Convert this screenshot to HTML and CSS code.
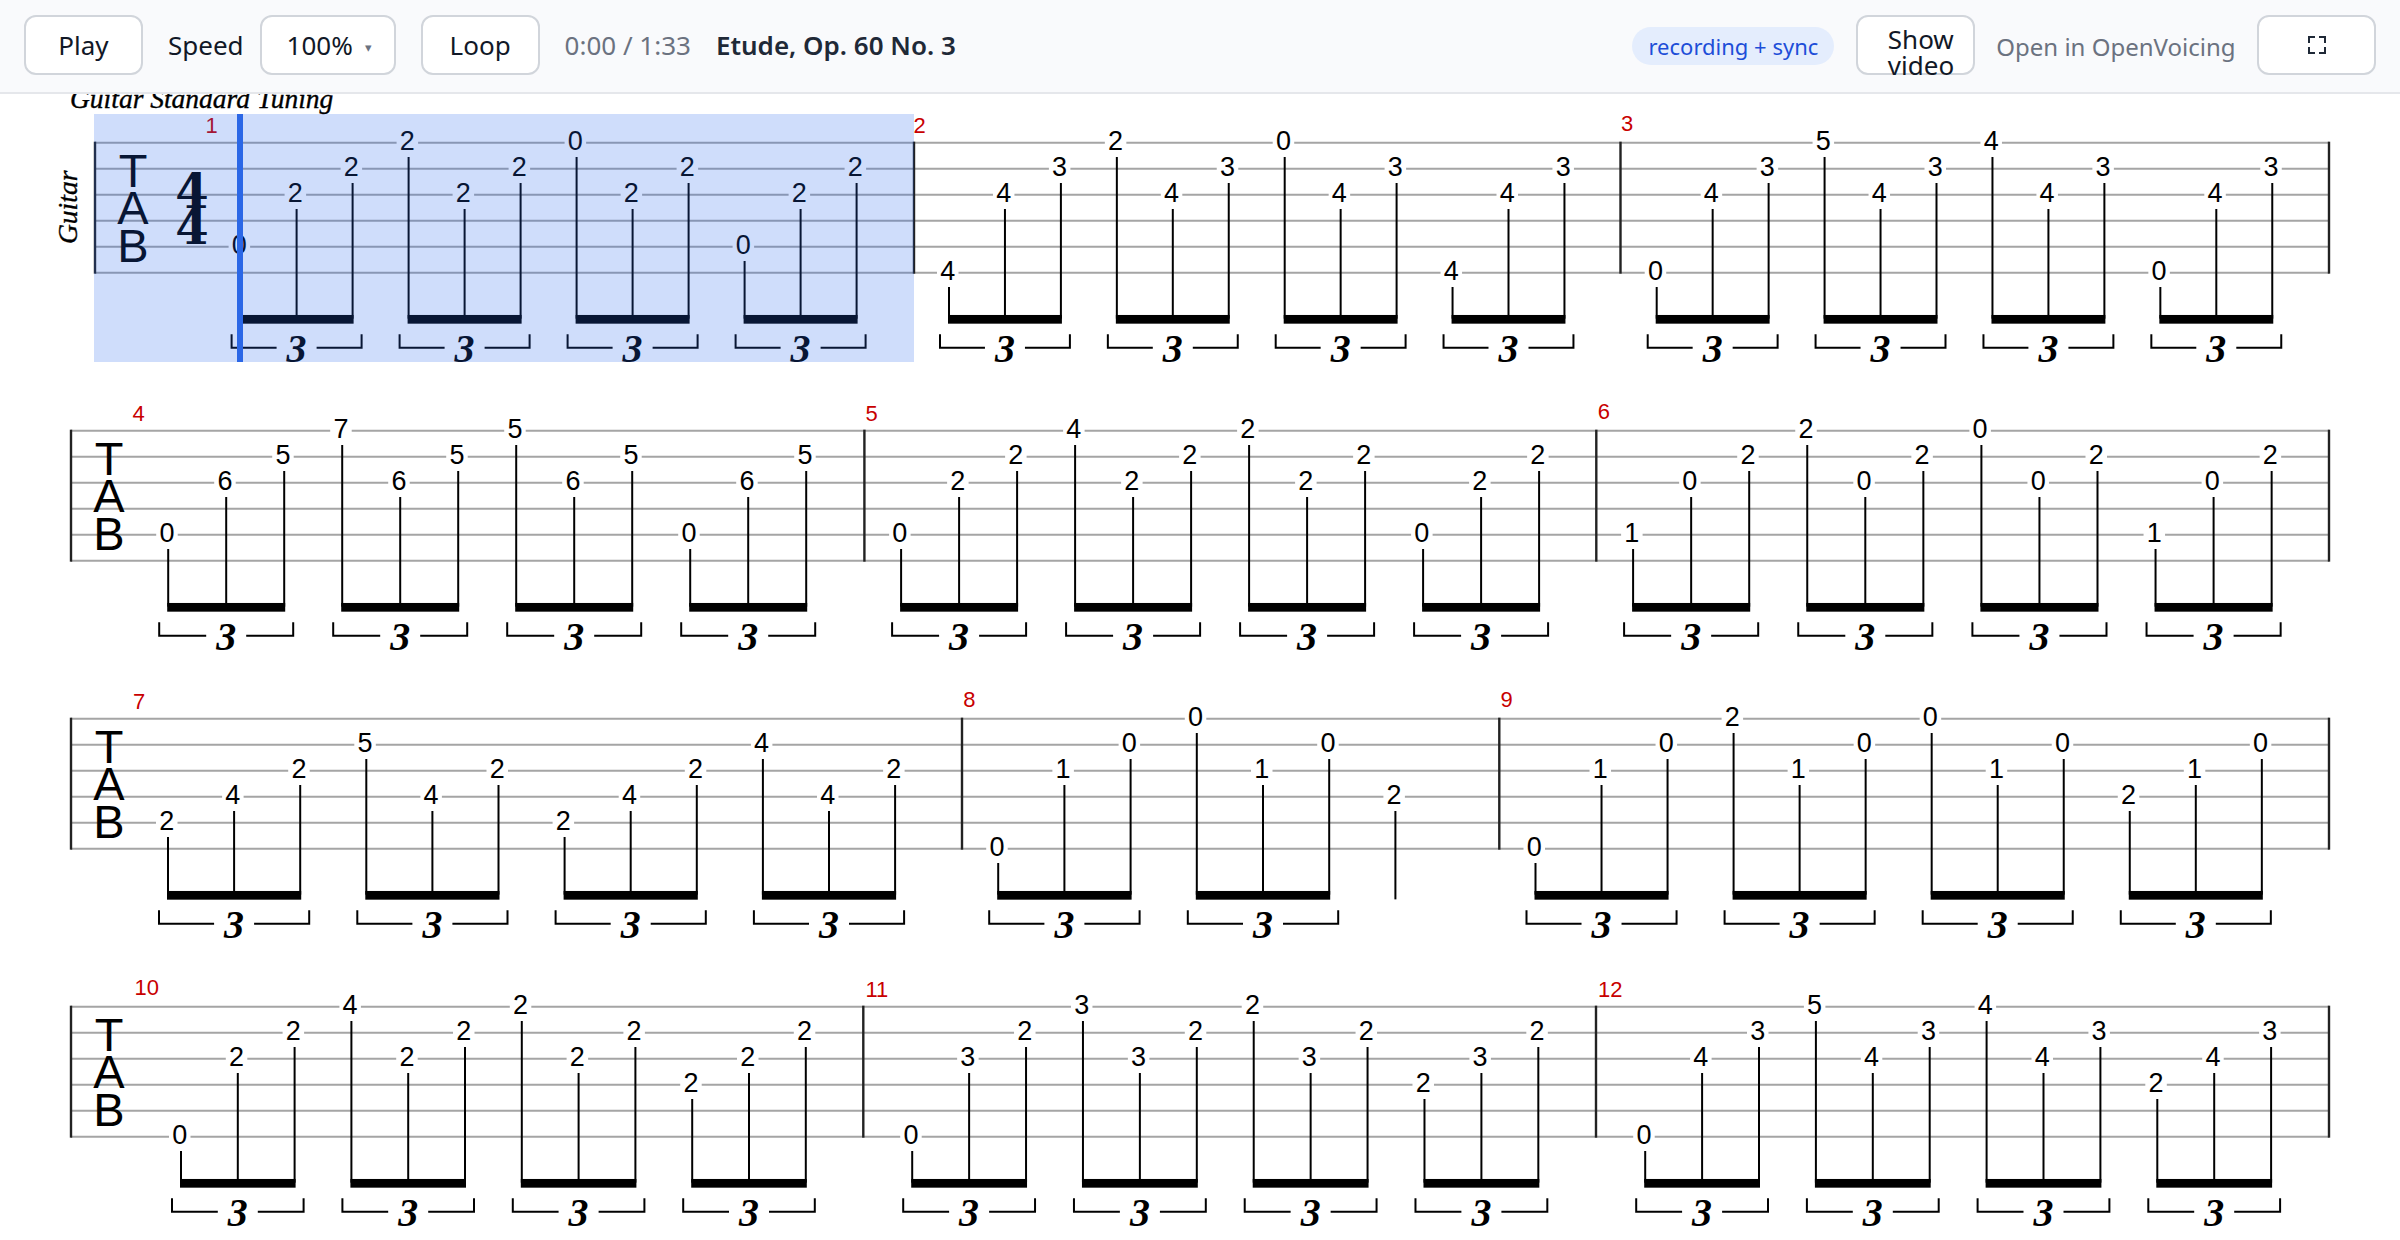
FILE: index.html
```html
<!DOCTYPE html>
<html lang="en">
<head>
<meta charset="utf-8">
<title>Etude, Op. 60 No. 3</title>
<link rel="stylesheet" href="styles.css">
</head>
<body>
<header class="toolbar">
  <button class="btn">Play</button>
  <div class="speed">
    <span class="speed-label">Speed</span>
    <div class="select"><span>100%</span><span class="caret">▾</span></div>
  </div>
  <button class="btn">Loop</button>
  <span class="time">0:00 / 1:33</span>
  <strong class="title">Etude, Op. 60 No. 3</strong>
  <div class="right">
    <span class="pill">recording + sync</span>
    <button class="btn btn-wrap">Show video</button>
    <a class="open-link">Open in OpenVoicing</a>
    <button class="btn" aria-label="Fullscreen">
      <svg class="fs-icon" viewBox="0 0 18 18"><path d="M1 7V1H7M11 1H17V7M17 11V17H11M7 17H1V11"/></svg>
    </button>
  </div>
</header>
<main class="score">
  <svg id="tab" class="tab" viewBox="0 94 2400 1146"></svg>
  <div class="highlight"></div>
  <div class="cursor"></div>
</main>
<script src="score.js"></script>
</body>
</html>
```

FILE: styles.css
```css
* { box-sizing: border-box; }
html, body { margin: 0; height: 100%; background: #fff; overflow: hidden; }
body { font-family: "Noto Sans", sans-serif; color: #111827; }

.toolbar {
  display: flex;
  align-items: center;
  gap: 25px;
  height: 94px;
  padding: 0 24px 2px;
  background: #f9fafc;
  border-bottom: 2px solid #e5e7eb;
  font-size: 26px;
  position: relative;
  z-index: 2;
}
.btn {
  width: 119px;
  height: 60px;
  padding: 0;
  background: #fff;
  border: 2px solid #d1d5db;
  border-radius: 12px;
  font: inherit;
  line-height: 26px;
  color: #111827;
  display: flex;
  align-items: center;
  justify-content: center;
}
.btn-wrap { display: block; padding: 9px 30px 0; }
.speed { display: flex; align-items: center; gap: 16px; }
.select {
  width: 136px;
  height: 60px;
  background: #fff;
  border: 2px solid #d1d5db;
  border-radius: 12px;
  display: flex;
  align-items: center;
  padding-left: 25px;
  gap: 12px;
}
.caret { font-size: 13px; color: #6b7280; padding-top: 4px; }
.time { color: #6b7280; }
.title { font-weight: 600; color: #1f2937; }
.right { margin-left: auto; display: flex; align-items: center; gap: 21.5px; }
.pill {
  background: #e4edfd;
  color: #1d4ed8;
  font-size: 22px;
  height: 38px;
  line-height: 38px;
  margin-top: 2px;
  padding: 0 16px;
  border-radius: 19px;
}
.open-link { color: #6b7280; font-size: 24px; padding-top: 2px; }
.fs-icon { width: 18px; height: 18px; fill: none; stroke: #1f2937; stroke-width: 2; }

.score { position: relative; height: 1146px; }
.tab { display: block; width: 2400px; height: 1146px; }
.highlight {
  position: absolute;
  left: 94px;
  top: 20px;
  width: 820px;
  height: 248px;
  background: rgba(37, 99, 235, .22);
}
.cursor {
  position: absolute;
  left: 237px;
  top: 20px;
  width: 6px;
  height: 248px;
  background: #2b67e6;
}

.staff-line { stroke: #a5a5a5; stroke-width: 2; }
.bar-line { stroke: #222; stroke-width: 2.4; }
.stem { stroke: #000; stroke-width: 2; }
.bracket { fill: none; stroke: #000; stroke-width: 2; }
.beam { fill: #000; }
.gap { fill: #fff; }
.fret { font: 27px "Liberation Sans", Arial, sans-serif; text-anchor: middle; fill: #000; }
.clef { font: 47px "Liberation Sans", Arial, sans-serif; text-anchor: middle; fill: #000; }
.bar-no { font: 22px "Liberation Sans", Arial, sans-serif; fill: #c80000; }
.tuplet { font: italic bold 40px "Liberation Serif", serif; text-anchor: middle; fill: #000; }
.meter { font: bold 48px "DejaVu Serif", serif; text-anchor: middle; fill: #000; }
.tuning { font: italic 27.5px "Liberation Serif", serif; fill: #000; stroke: #000; stroke-width: .35; }
.track { font: italic 27.5px "Liberation Serif", serif; fill: #000; stroke: #000; stroke-width: .35; }
```

FILE: score.js
```js
// Each row: staff top, staff left, clef x, bar lines, bars.
// Each bar: number, number x, number baseline, first stem x, note spacing,
// first notes of each triplet [fret, string], middle note, last note.
var rows = [
  { top: 142.67, left: 95, clef: 133, lines: [95, 914, 1620.5, 2329], bars: [
    { n: 1, nx: 205.5, ny: 133, x0: 240.6, dx: 56, first: [[0,5],[2,1],[0,1],[0,5]], mid: [2,3], last: [2,2] },
    { n: 2, nx: 913.5, ny: 133, x0: 949, dx: 55.95, first: [[4,6],[2,1],[0,1],[4,6]], mid: [4,3], last: [3,2] },
    { n: 3, nx: 1621, ny: 131, x0: 1656.7, dx: 55.96, first: [[0,6],[5,1],[4,1],[0,6]], mid: [4,3], last: [3,2] }
  ]},
  { top: 430.67, left: 71, clef: 109, lines: [71, 864.4, 1596.3, 2329], bars: [
    { n: 4, nx: 132.5, ny: 421, x0: 168.2, dx: 58, first: [[0,5],[7,1],[5,1],[0,5]], mid: [6,3], last: [5,2] },
    { n: 5, nx: 865.5, ny: 421, x0: 901.1, dx: 58, first: [[0,5],[4,1],[2,1],[0,5]], mid: [2,3], last: [2,2] },
    { n: 6, nx: 1597.7, ny: 418.5, x0: 1633.1, dx: 58.05, first: [[1,5],[2,1],[0,1],[1,5]], mid: [0,3], last: [2,2] }
  ]},
  { top: 718.67, left: 71, clef: 109, lines: [71, 962, 1499.3, 2329], bars: [
    { n: 7, nx: 133, ny: 709, x0: 168, dx: 66.1, first: [[2,5],[5,2],[2,5],[4,2]], mid: [4,4], last: [2,3] },
    { n: 8, nx: 963.3, ny: 707, x0: 998.2, dx: 66.2, first: [[0,6],[0,1]], mid: [1,3], last: [0,2], single: [2,4] },
    { n: 9, nx: 1500.4, ny: 707, x0: 1535.5, dx: 66.03, first: [[0,6],[2,1],[0,1],[2,4]], mid: [1,3], last: [0,2] }
  ]},
  { top: 1006.67, left: 71, clef: 109, lines: [71, 863.3, 1596, 2329], bars: [
    { n: 10, nx: 134.5, ny: 995, x0: 181, dx: 56.8, first: [[0,6],[4,1],[2,1],[2,4]], mid: [2,3], last: [2,2] },
    { n: 11, nx: 865.5, ny: 996.7, x0: 912.2, dx: 56.92, first: [[0,6],[3,1],[2,1],[2,4]], mid: [3,3], last: [2,2] },
    { n: 12, nx: 1597.9, ny: 997, x0: 1645.2, dx: 56.9, first: [[0,6],[5,1],[4,1],[2,4]], mid: [4,3], last: [3,2] }
  ]}
];

var GAP = 26;
var gaps = '', back = '', front = '';

function line(cls, x1, y1, x2, y2) {
  return '<line class="' + cls + '" x1="' + x1 + '" y1="' + y1 + '" x2="' + x2 + '" y2="' + y2 + '"/>';
}
function text(cls, x, y, s, extra) {
  return '<text class="' + cls + '" x="' + x + '" y="' + y + '"' + (extra || '') + '>' + s + '</text>';
}
function note(top, x, note, stemEnd) {
  var y = top + (note[1] - 1) * GAP;
  gaps += '<rect class="gap" x="' + (x - 12) + '" y="' + (y - 3) + '" width="21.5" height="6"/>';
  front += text('fret', x - 1.3, y + 7.4, note[0]);
  front += line('stem', x, y + 14.3, x, stemEnd);
}

rows.forEach(function (row) {
  var top = row.top, i;
  for (i = 0; i < 6; i++) back += line('staff-line', row.left, top + i * GAP, 2329, top + i * GAP);
  row.lines.forEach(function (x) { back += line('bar-line', x, top - 1, x, top + 130 + 1); });

  front += text('clef', row.clef, top + 44, 'T') + text('clef', row.clef, top + 81.4, 'A') + text('clef', row.clef, top + 119, 'B');

  row.bars.forEach(function (bar) {
    front += text('bar-no', bar.nx, bar.ny, bar.n);
    bar.first.forEach(function (f, t) {
      var x1 = bar.x0 + t * 3 * bar.dx, x2 = x1 + bar.dx, x3 = x2 + bar.dx;
      note(top, x1, f, top + 176);
      note(top, x2, bar.mid, top + 176);
      note(top, x3, bar.last, top + 176);
      front += '<rect class="beam" x="' + (x1 - 1) + '" y="' + (top + 172.3) + '" width="' + (x3 - x1 + 2) + '" height="8.7"/>';
      var half = bar.dx + 9, yt = top + 191.5, yb = top + 205.2;
      front += '<path class="bracket" d="M' + (x2 - half) + ' ' + yt + 'V' + yb + 'H' + (x2 - 20) + 'M' + (x2 + 20) + ' ' + yb + 'H' + (x2 + half) + 'V' + yt + '"/>';
      front += text('tuplet', x2, top + 219, '3');
    });
    if (bar.single) {
      note(top, bar.x0 + bar.first.length * 3 * bar.dx, bar.single, top + 180.7);
    }
  });
});

front += text('meter', 192, 208, '4') + text('meter', 192, 244, '4');
front += text('tuning', 70, 108.3, 'Guitar Standard Tuning');
front += text('track', 77, 244, 'Guitar', ' transform="rotate(-90 77 244)"');

document.getElementById('tab').innerHTML = back + gaps + front;
```
